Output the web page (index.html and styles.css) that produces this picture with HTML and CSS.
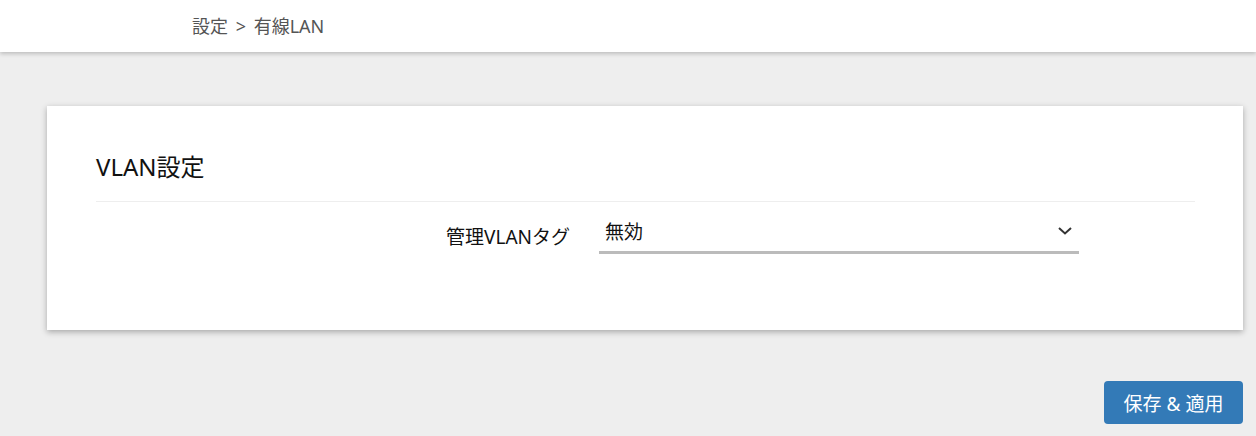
FILE: index.html
```html
<!DOCTYPE html>
<html lang="ja">
<head>
    <meta charset="UTF-8">
    <meta name="viewport" content="width=device-width, initial-scale=1.0">
    <title>有線LAN</title>
    <link rel="stylesheet" href="styles.css">
</head>
<body>
    <header class="topbar">
        <div class="breadcrumb">設定 &gt; 有線LAN</div>
    </header>

    <main class="content">
        <section class="card">
            <h2 class="card-title">VLAN設定</h2>
            <div class="form-row">
                <label class="form-label">管理VLANタグ</label>
                <div class="select-box">
                    <span class="select-value">無効</span>
                    <svg class="chevron" width="14" height="8" viewBox="0 0 14 8">
                        <polyline points="1,1 7,6.5 13,1" fill="none" stroke="#333" stroke-width="2"/>
                    </svg>
                </div>
            </div>
        </section>

        <div class="actions">
            <button class="btn-save">保存 &amp; 適用</button>
        </div>
    </main>
</body>
</html>
```

FILE: styles.css
```css
/* Global Styles */
* {
    margin: 0;
    padding: 0;
    box-sizing: border-box;
}

body {
    font-family: "Noto Sans", "Noto Sans CJK JP", sans-serif;
    background-color: #eeeeee;
    color: #222;
}

.topbar {
    height: 52px;
    background-color: #fff;
    box-shadow: 0 2px 4px rgba(0, 0, 0, 0.2);
    display: flex;
    align-items: center;
    padding-left: 192px;
    padding-bottom: 2px;
}

.breadcrumb {
    font-size: 18px;
    word-spacing: 3px;
    color: #555;
}

.content {
    padding: 54px 13px 0 47px;
}

.card {
    height: 224px;
    background-color: #fff;
    box-shadow: 0 2px 6px rgba(0, 0, 0, 0.3);
    padding: 43px 48px 0 49px;
}

.card-title {
    font-size: 24px;
    font-weight: normal;
    line-height: 35px;
    padding-bottom: 17px;
    border-bottom: 1px solid #eee;
    color: #111;
}

.form-row {
    display: flex;
    align-items: center;
    margin-top: 15px;
}

.form-label {
    width: 503px;
    padding-right: 29px;
    text-align: right;
    font-size: 19px;
    color: #111;
}

.select-box {
    width: 480px;
    height: 37px;
    display: flex;
    align-items: center;
    justify-content: space-between;
    padding: 0 7px 6px 6px;
    border-bottom: 3px solid #bbb;
}

.select-value {
    font-size: 19px;
    color: #111;
}

.actions {
    display: flex;
    justify-content: flex-end;
    margin-top: 51px;
}

.btn-save {
    width: 139px;
    height: 43px;
    border: none;
    border-radius: 4px;
    background-color: #337ab7;
    color: #fff;
    font-family: inherit;
    font-size: 19px;
}
```
